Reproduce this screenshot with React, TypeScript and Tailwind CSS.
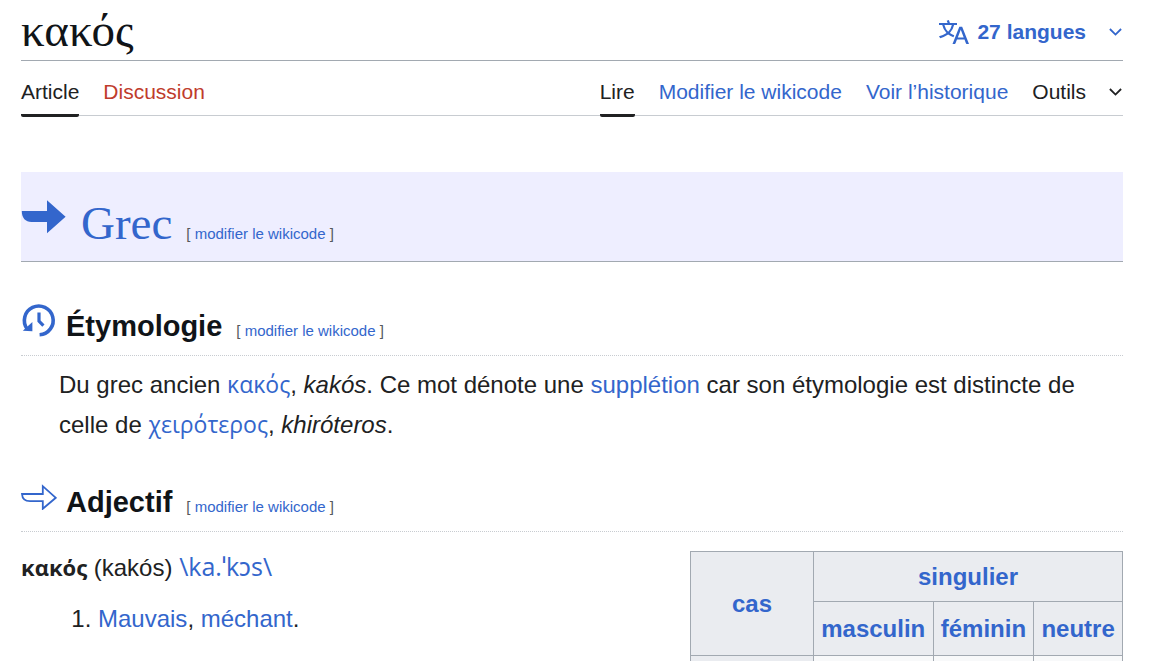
import type { ReactNode } from "react";

const LINK = "text-[#3366cc]";
const GREEK_LINK = "font-['Open_Sans','Noto_Sans',sans-serif] text-[23px] leading-none text-[#3366cc]";

function Chevron() {
  return (
    <svg viewBox="0 0 13 13" className="mr-px size-[13px] shrink-0" fill="none" stroke="currentColor" strokeWidth="1.8" aria-hidden="true">
      <path d="M0.9 3 6.5 8.6 12.1 3" />
    </svg>
  );
}

function LanguageIcon() {
  return (
    <svg viewBox="0 0 20 20" className="size-[30px] shrink-0" fill="currentColor" aria-hidden="true">
      <path d="M20 18h-1.44a.6.6 0 0 1-.4-.12.8.8 0 0 1-.23-.31L17 15h-5l-1 2.54a.8.8 0 0 1-.22.3.6.6 0 0 1-.4.14H9l4.55-11.47h1.89zm-3.53-4.31L14.89 9.5a12 12 0 0 1-.39-1.24q-.09.37-.19.69l-.19.56-1.58 4.19zm-6.3-1.58a13.4 13.4 0 0 1-2.91-1.41 11.46 11.46 0 0 0 2.81-5.37H12V4H7.31a4 4 0 0 0-.2-.56C6.87 2.79 6.6 2 6.6 2l-1.47.5s.4.89.6 1.5H0v1.33h2.15A11.23 11.23 0 0 0 5 10.7a17.2 17.2 0 0 1-5 2.1q.56.82.87 1.38a23.3 23.3 0 0 0 5.22-2.51 15.6 15.6 0 0 0 3.56 1.77zM3.63 5.33h4.91a8.1 8.1 0 0 1-2.45 4.45 9.1 9.1 0 0 1-2.46-4.45" />
    </svg>
  );
}

function SolidArrow() {
  return (
    <svg viewBox="0 0 45 34" className="h-[34px] w-[45px] shrink-0" fill="#3366cc" aria-hidden="true">
      <path d="M0.8 11H26V0.2L44.6 16.7 26 33.2V22H10.5C4.5 22 0.8 18 0.8 11Z" />
    </svg>
  );
}

function OutlineArrow() {
  return (
    <svg viewBox="0 0 36 28" className="h-7 w-9 shrink-0" fill="none" stroke="#3366cc" strokeWidth="1.8" aria-hidden="true">
      <path d="M1 12H21.8V4.2L34.8 15.8 21.8 26.8V19.2H9C4 19.2 1.3 17 1 12Z" />
    </svg>
  );
}

function HistoryIcon() {
  return (
    <svg viewBox="0 0 36 36" className="size-9 shrink-0" fill="none" stroke="#3366cc" aria-hidden="true">
      <path d="M6.2 27A14.4 14.4 0 1 1 18.6 32.8" strokeWidth="3.6" />
      <path d="M1.8 28.8 11.4 20V29.2Z" fill="#3366cc" stroke="none" />
      <path d="M18 10.4V19.2L22.4 23.6" strokeWidth="3.2" />
    </svg>
  );
}

function EditLink() {
  return (
    <span className="text-[15px] leading-6 font-normal whitespace-nowrap text-[#54595d]">
      [ <a href="#edit" className={LINK}>modifier le wikicode</a> ]
    </span>
  );
}

function SectionHeading({ icon, children }: { icon: ReactNode; children: ReactNode }) {
  return (
    <div className="flex h-[60px] items-start gap-[9px] border-b border-dotted border-[#c8ccd1]">
      <div className="flex h-12 items-center">{icon}</div>
      <div className="flex items-baseline gap-3.5 pt-2">
        <h3 className="text-[29px] leading-[44px] font-bold text-[#101418]">{children}</h3>
        <EditLink />
      </div>
    </div>
  );
}

function Tab({ children, tone, active = false }: { children: ReactNode; tone: string; active?: boolean }) {
  return (
    <a
      href="#tab"
      className={`-mb-0.5 flex h-14 items-center pt-[9px] ${tone} ${active ? "rounded-b-xs border-b-3 border-[#202122]" : "border-b-3 border-transparent"}`}
    >
      {children}
    </a>
  );
}

function HeadCell({ children, colSpan, rowSpan }: { children?: ReactNode; colSpan?: number; rowSpan?: number }) {
  return (
    <th colSpan={colSpan} rowSpan={rowSpan} className="border border-[#a2a9b1] bg-[#eaecf0] px-[7px] text-center align-middle font-bold">
      <a href="#term" className={LINK}>{children}</a>
    </th>
  );
}

export default function App() {
  return (
    <div className="h-screen overflow-hidden bg-white pr-[51px] pl-[21px] font-['Liberation_Sans','Noto_Sans',sans-serif] text-2xl text-[#202122]">
      <header>
        <div className="flex h-[61px] items-start justify-between border-b border-[#a2a9b1] pt-1">
          <h1 className="font-['Liberation_Serif',serif] text-[47px] leading-[52px] text-[#101418]">κακός</h1>
          <button type="button" className={`flex h-14 items-center gap-2 text-[21px] font-bold ${LINK}`}>
            <LanguageIcon />
            <span className="mr-[15px]">27 langues</span>
            <Chevron />
          </button>
        </div>
        <nav className="flex h-[55px] justify-between border-b border-[#c8ccd1] text-[21px] leading-7">
          <div className="flex gap-6">
            <Tab tone="text-[#202122]" active>Article</Tab>
            <Tab tone="text-[#bf3c2c]">Discussion</Tab>
          </div>
          <div className="flex gap-6">
            <Tab tone="text-[#202122]" active>Lire</Tab>
            <Tab tone="text-[#3366cc]">Modifier le wikicode</Tab>
            <Tab tone="text-[#3366cc]">Voir l’historique</Tab>
            <button type="button" className="flex h-[53px] items-center gap-[23px] pt-[9px]">
              Outils
              <Chevron />
            </button>
          </div>
        </nav>
      </header>

      <main>
        <div className="mt-14 flex h-[90px] items-start gap-[15px] border-b border-[#a2a9b1] bg-[#eeeeff] pt-7">
          <SolidArrow />
          <div className="flex items-baseline gap-3.5">
            <h2 className={`font-['Liberation_Serif',serif] text-[47px] leading-[46px] ${LINK}`}>Grec</h2>
            <EditLink />
          </div>
        </div>

        <section className="mt-[34px]">
          <SectionHeading icon={<HistoryIcon />}>Étymologie</SectionHeading>
          <p className="mt-[9px] ml-[38px] leading-10">
            Du grec ancien <a href="#kakos" lang="grc" className={GREEK_LINK}>κακός</a>, <i>kakós</i>. Ce mot dénote une{" "}
            <a href="#suppletion" className={LINK}>supplétion</a> car son étymologie est distincte de celle de{" "}
            <a href="#kheiroteros" lang="grc" className={GREEK_LINK}>χειρότερος</a>, <i>khiróteros</i>.
          </p>
        </section>

        <section className="mt-[27px]">
          <SectionHeading icon={<OutlineArrow />}>Adjectif</SectionHeading>
          <div className="flex items-start justify-between">
            <div className="pt-4 leading-10">
              <p>
                <b lang="el" className="font-['Open_Sans','Noto_Sans',sans-serif] text-[22px] leading-none">κακός</b> (kakós){" "}
                <a href="#pron" className="font-['Open_Sans','Noto_Sans',sans-serif] text-[25px] leading-none text-[#3366cc]">\ka.ˈkɔs\</a>
              </p>
              <ol className="mt-[11px] list-decimal pl-[77px]">
                <li>
                  <a href="#mauvais" className={LINK}>Mauvais</a>, <a href="#mechant" className={LINK}>méchant</a>.
                </li>
              </ol>
            </div>
            <table className="mt-[19px] w-[433px] border-collapse">
              <colgroup>
                <col className="w-[123px]" />
                <col />
                <col />
                <col />
              </colgroup>
              <thead>
                <tr className="h-[50px]">
                  <HeadCell rowSpan={2}>cas</HeadCell>
                  <HeadCell colSpan={3}>singulier</HeadCell>
                </tr>
                <tr className="h-[54px]">
                  <HeadCell>masculin</HeadCell>
                  <HeadCell>féminin</HeadCell>
                  <HeadCell>neutre</HeadCell>
                </tr>
              </thead>
              <tbody>
                <tr className="h-[50px]">
                  <th className="border border-[#a2a9b1] bg-[#eaecf0]" />
                  <td className="border border-[#a2a9b1] bg-[#f8f9fa]" />
                  <td className="border border-[#a2a9b1] bg-[#f8f9fa]" />
                  <td className="border border-[#a2a9b1] bg-[#f8f9fa]" />
                </tr>
              </tbody>
            </table>
          </div>
        </section>
      </main>
    </div>
  );
}
